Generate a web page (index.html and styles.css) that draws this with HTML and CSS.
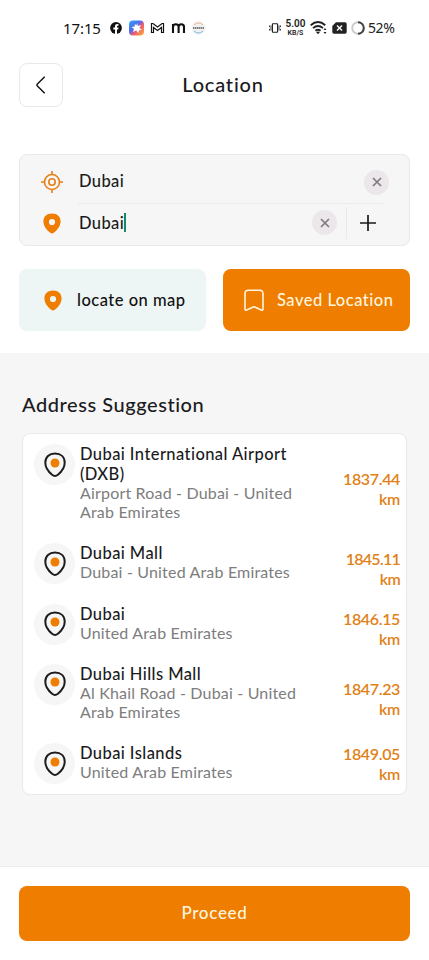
FILE: index.html
```html
<!DOCTYPE html>
<html lang="en">
<head>
<meta charset="utf-8">
<title>Location</title>
<link rel="stylesheet" href="styles.css">
</head>
<body>
<svg class="defs" width="0" height="0">
  <symbol id="pin" viewBox="0 0 18 21"><path fill-rule="evenodd" d="M9 .4C3.600 .4.400 3.600.400 8.300c0 4.800 3.600 9.200 6.800 11.500 1.200.9 2.400.9 3.600 0 3.200-2.300 6.800-6.700 6.800-11.500C17.600 3.600 14.400.4 9 .4zm0 5.500a3.100 3.100 0 1 1 0 6.200 3.100 3.100 0 0 1 0-6.200z" fill="#ee7d00"/></symbol>
  <symbol id="place" viewBox="0 0 22 26"><path d="M11 1.500C5.200 1.500 1.300 5 1.300 10.600c0 4.600 3.300 9.400 6.800 12.200 1.800 1.500 4 1.500 5.800 0 3.500-2.800 6.800-7.600 6.800-12.200C20.700 5 16.800 1.500 11 1.500z" fill="none" stroke="#1d1d1f" stroke-width="2"/><circle cx="11" cy="11" r="4.500" fill="#ee7d00"/></symbol>
  <symbol id="cross" viewBox="0 0 10 10"><path d="M1 1l8 8M9 1L1 9" stroke="#807b80" stroke-width="1.700"/></symbol>
</svg>
<div class="status">
  <span class="clock">17:15</span>
  <svg class="apps" width="96" height="16" viewBox="0 0 96 16">
    <circle cx="6" cy="8" r="5.900" fill="#111"/><path d="M5 14V9.500H3.300V7.400H5V6.200C5 4.500 6 3.700 8.500 4v1.800C7.300 5.700 7 6 7 6.700v.7h1.500L8.200 9.500H7V14z" fill="#fff"/>
    <defs><linearGradient id="g" x1="0" y1="0" x2="1" y2="1"><stop offset="0" stop-color="#35a5f0"/><stop offset=".4" stop-color="#4d6df0"/><stop offset=".6" stop-color="#ed5b72"/><stop offset="1" stop-color="#ffb52e"/></linearGradient></defs>
    <rect x="19" y=".5" width="15" height="15" rx="4" fill="url(#g)"/><path d="M27 3l1 3 3-1-1.500 3L32 10l-3 .3L28.500 13 26 10.500 23 12l1-3-2.500-2 3-.5L25 4l1.500 1.500z" fill="#fff"/>
    <path d="M41.500 12.500v-9H43l4.500 3.500L52 3.500h1.500v9h-2V7.500l-4 3-4-3v5z" fill="none" stroke="#111" stroke-width="1.200"/>
    <path d="M63 13V4M63 7q0-2.700 2.800-2.700T68.600 7v6M68.600 7q0-2.700 2.700-2.700T74 7v6" fill="none" stroke="#111" stroke-width="2.100"/>
    <circle cx="88.500" cy="8" r="7" fill="#f2f2f3"/><path d="M84 5q4.500-4 9 0" stroke="#f3b18c" fill="none"/><path d="M84 11q4.500 4 9 0" stroke="#75b9e5" fill="none"/><path d="M83 8h11" stroke="#555" stroke-width="1.700" stroke-dasharray="1.500 .5"/>
  </svg>
  <svg class="vibe" width="12" height="12" viewBox="0 0 14 12"><rect x="4" y="1" width="6" height="10" rx=".5" fill="none" stroke="#222" stroke-width="1.300"/><path d="M2.300 3v6M11.700 3v6M.6 3v2M.6 7v2M13.400 3v2M13.400 7v2" stroke="#222"/></svg>
  <span class="speed"><b>5.00</b><i>KB/S</i></span>
  <svg class="wifi" width="18" height="15" viewBox="0 0 18 15"><g fill="none" stroke="#222" stroke-width="1.900"><path d="M.7 5.200q7.300-6.200 14.600 0M3 8.100q5-4.300 10 0M5.400 10.700q2.600-2 5.200 0"/></g><path d="M6 12l2 2.300L10 12q-2-1.200-4 0z" fill="#222"/><path d="M13.500 10l1.500-2 1.500 2zM13.500 12l1.500 2 1.500-2z" fill="#222"/></svg>
  <svg class="sim" width="15" height="12" viewBox="0 0 15 12"><path d="M4 .3h9q1.700 0 1.700 1.700v8q0 1.700-1.700 1.700H2Q.3 11.700.3 10V4z" fill="#222"/><path d="M5 3.500l5 5M10 3.500l-5 5" stroke="#fff" stroke-width="1.400"/></svg>
  <svg class="ring" width="14" height="14" viewBox="0 0 14 14"><circle cx="7" cy="7" r="5.800" fill="none" stroke="#ccc" stroke-width="2"/><path d="M7 1.200A5.800 5.800 0 0 1 7 12.800" fill="none" stroke="#444" stroke-width="2"/></svg>
  <span class="percent">52%</span>
</div>
<header class="header">
  <button class="back"><svg width="10" height="18" viewBox="0 0 10 18"><path d="M8.700.8L1.400 8q-.9 1 0 2l7.300 7.200" fill="none" stroke="#151515" stroke-width="1.500"/></svg></button>
  <h1>Location</h1>
</header>
<section class="search">
  <div class="field">
    <svg class="lead" width="22" height="22" viewBox="0 0 22 22" fill="none" stroke="#e77f17" stroke-width="1.600"><circle cx="11" cy="11" r="7.500"/><circle cx="11" cy="11" r="3.200"/><path d="M11 0v3.500M11 18.500V22M0 11h3.500M18.500 11H22"/></svg>
    <span class="value">Dubai</span>
    <button class="clear"><svg width="10" height="10"><use href="#cross"/></svg></button>
  </div>
  <hr>
  <div class="field second">
    <svg class="lead" width="22" height="21"><use href="#pin"/></svg>
    <span class="value">Dubai<i class="caret"></i></span>
    <button class="clear"><svg width="10" height="10"><use href="#cross"/></svg></button>
    <button class="add"><svg width="16" height="16" viewBox="0 0 16 16"><path d="M0 8h16M8 0v16" stroke="#1b1b1d" stroke-width="1.700"/></svg></button>
  </div>
</section>
<div class="actions">
  <button class="map"><svg width="18" height="21"><use href="#pin"/></svg><span>locate on map</span></button>
  <button class="saved"><svg width="20" height="23" viewBox="0 0 20 23"><path d="M4.500 1.200h11Q19 1.200 19 4.700V20q0 1.700-1.700 1L10.700 18q-.7-.3-1.400 0l-6.600 3Q1 21.700 1 20V4.700q0-3.500 3.500-3.500z" fill="none" stroke="#fff5df" stroke-width="1.600"/></svg><span>Saved Location</span></button>
</div>
<main class="suggest">
  <h2>Address Suggestion</h2>
  <ul class="list">
    <li><span class="icon"><svg width="22" height="26"><use href="#place"/></svg></span><div class="text"><h3>Dubai International Airport (DXB)</h3><p>Airport Road - Dubai - United Arab Emirates</p></div><span class="dist">1837.44 km</span></li>
    <li><span class="icon"><svg width="22" height="26"><use href="#place"/></svg></span><div class="text"><h3>Dubai Mall</h3><p>Dubai - United Arab Emirates</p></div><span class="dist narrow">1845.11 km</span></li>
    <li><span class="icon"><svg width="22" height="26"><use href="#place"/></svg></span><div class="text"><h3>Dubai</h3><p>United Arab Emirates</p></div><span class="dist">1846.15 km</span></li>
    <li><span class="icon"><svg width="22" height="26"><use href="#place"/></svg></span><div class="text"><h3>Dubai Hills Mall</h3><p>Al Khail Road - Dubai - United Arab Emirates</p></div><span class="dist">1847.23 km</span></li>
    <li><span class="icon"><svg width="22" height="26"><use href="#place"/></svg></span><div class="text"><h3>Dubai Islands</h3><p>United Arab Emirates</p></div><span class="dist">1849.05 km</span></li>
  </ul>
</main>
<footer class="footer"><button class="proceed">Proceed</button></footer>
</body>
</html>
```
FILE: styles.css
```css
* { box-sizing: border-box; margin: 0; padding: 0; }
body {
  height: 960px;
  display: flex;
  flex-direction: column;
  background: #fff;
  color: #1b1b1d;
  font: 500 16.5px/20px Lato, "Liberation Sans", sans-serif;
  overflow: hidden;
}
button { border: 0; background: none; font: inherit; color: inherit; display: flex; align-items: center; justify-content: center; }
svg { display: block; flex: none; }
i { font-style: normal; }
.defs { position: absolute; }

.status { height: 55px; padding: 0 0 0 63px; display: flex; align-items: center; font-family: "Noto Sans", sans-serif; color: #222; }
.clock { width: 47px; flex: none; font-size: 15px; font-weight: 400; letter-spacing: -.1px; color: #111; }
.apps { margin-right: 63px; }
.speed { width: 21px; flex: none; margin: 0 4px; font-family: Roboto, sans-serif; font-size: 7px; line-height: 8px; font-weight: 600; display: flex; flex-direction: column; align-items: center; }
.speed b { font-size: 10px; line-height: 10px; font-weight: 600; }
.sim { margin: 0 4px 0 4px; }
.percent { margin-left: 3px; font-size: 14px; font-weight: 400; letter-spacing: -.4px; }

.header { height: 60px; padding: 8px 19px; display: grid; grid-template-columns: 44px 1fr 44px; }
.back { width: 44px; height: 44px; border: 1px solid #e9e9e9; border-radius: 8px; }
.header h1 { margin-left: 17px; font-size: 20px; line-height: 42px; font-weight: 500; letter-spacing: .8px; text-align: center; }

.search { height: 92px; margin: 39px 19px 0; padding: 7px 20px 0; background: #f6f6f6; border: 1px solid #e9e9e9; border-radius: 8px; }
.field { height: 41px; display: flex; align-items: center; }
.lead { margin: -2px 16px 0 1px; }
.value { flex: 1; display: flex; align-items: center; letter-spacing: .4px; padding-bottom: 3px; }
.caret { width: 2px; height: 19px; background: #16866d; }
.clear { width: 25px; height: 25px; margin-top: -1px; border-radius: 50%; background: #ebe7ea; }
.search hr { border: 0; height: 1px; margin: 0 6px 0 38px; background: #ebebeb; }
.second { height: 37px; }
.second .value { padding-bottom: 0; }
.second .lead { margin-top: 2px; }
.second .clear { margin: 0; }
.second .add { width: 43px; height: 32px; margin-left: 9px; border-left: 1px solid #e9e9e9; }

.actions { height: 62px; margin: 23px 19px 22px; display: grid; grid-template-columns: 1fr 1fr; gap: 17px; }
.actions button { border-radius: 8px; letter-spacing: .5px; justify-content: flex-start; white-space: nowrap; }
.actions .map { background: #edf6f5; color: #111; padding-left: 25px; gap: 15px; }
.actions .saved { background: #ee7d00; color: #fff5df; padding-left: 21px; gap: 13px; }

.suggest { height: 513px; padding: 38px 22px 0; background: #f6f6f6; }
.suggest h2 { font-size: 20px; line-height: 26px; font-weight: 500; letter-spacing: .55px; }
.list { list-style: none; height: 362px; margin-top: 16px; padding: 10px 6px 0 11px; width: 385px; background: #fff; border: 1px solid #e9e9e9; border-radius: 8px; display: flex; flex-direction: column; gap: 9.3px; }
.list li { display: grid; grid-template-columns: 41px 220px 1fr; column-gap: 5px; align-items: start; }
.icon { width: 41px; height: 41px; border-radius: 50%; background: #f6f6f6; display: flex; align-items: center; justify-content: center; }
.text { padding-bottom: 12px; }
.list li:last-child .text { padding-bottom: 0; }
.text h3 { font-size: 16.5px; line-height: 20px; font-weight: 500; letter-spacing: .42px; }
.text p { margin: -1px 0 1px; font-size: 16px; line-height: 19px; font-weight: 400; letter-spacing: .18px; color: #7d7d7d; }
.dist { align-self: center; width: 60px; justify-self: end; text-align: right; color: #e18219; font-size: 16px; font-weight: 600; letter-spacing: -.35px; }
.dist.narrow { letter-spacing: -.75px; }

.footer { flex: 1; padding: 19px 19px 0; border-top: 1px solid #ededed; background: #fff; }
.proceed { width: 100%; height: 55px; padding-bottom: 1px; border-radius: 8px; background: #ee7d00; color: #fff5df; font-size: 17px; letter-spacing: .7px; }
```
